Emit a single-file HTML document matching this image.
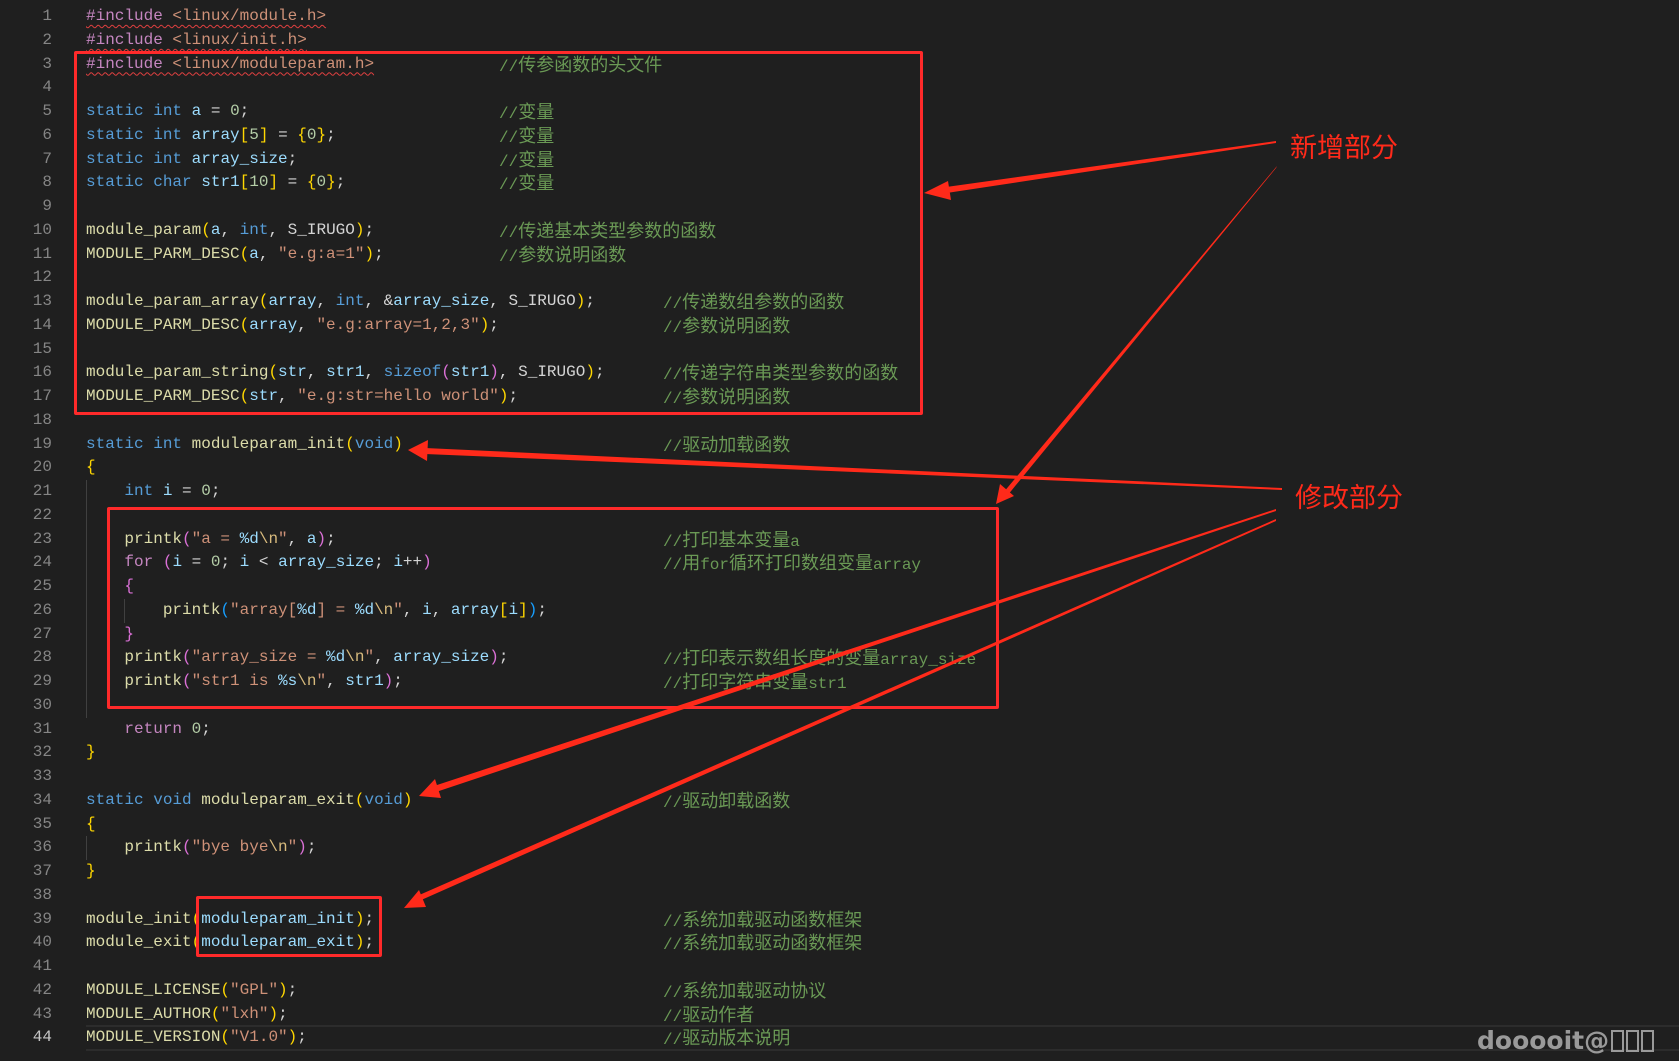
<!DOCTYPE html>
<html><head><meta charset="utf-8">
<style>
html,body{margin:0;padding:0;background:#1f1f1f;}
body{width:1679px;height:1061px;position:relative;overflow:hidden;font-family:"Liberation Mono","Noto Sans CJK SC",monospace;font-size:16px;color:#d4d4d4;}
#code{position:absolute;left:0;top:5px;width:1679px;}
.l{position:relative;height:23.76px;line-height:23.76px;white-space:pre;}
.n{position:absolute;right:1627px;top:0;color:#858585;text-align:right;}
.c{position:absolute;left:86px;top:0;}
.m{position:absolute;top:0;color:#6a9955;}
.m1{left:499px}.m2{left:663px}
.z{font-family:"Noto Sans CJK SC",sans-serif;font-size:18px;letter-spacing:0px;}
.k{color:#569cd6}.p{color:#c586c0}.f{color:#dcdcaa}.v{color:#9cdcfe}.s{color:#ce9178}.d{color:#b5cea8}.e{color:#d7ba7d}
.g{color:#ffd700}.o{color:#da70d6}.b{color:#179fff}.w{color:#d4d4d4}
.sq{text-decoration:underline wavy #e04040;text-underline-offset:4px;text-decoration-thickness:1px;}
.guide{position:absolute;width:1px;background:#404040;}
.box{position:absolute;border:3px solid #ff2a2a;border-radius:2px;}
.lbl{position:absolute;color:#ff2a1a;font-family:"Noto Sans CJK SC",sans-serif;font-size:27px;}
#wm{position:absolute;left:1477px;top:1026px;color:#9a9a9a;font-family:"DejaVu Sans",sans-serif;font-weight:bold;font-size:25px;white-space:nowrap;}
.tofu{display:inline-block;width:13px;height:22px;border:2px solid #9a9a9a;margin-left:2px;vertical-align:-3px;box-sizing:border-box;}
</style></head><body>
<div style="position:absolute;left:86px;top:1025px;width:1593px;height:22px;border-top:2px solid #2c2c2c;border-bottom:2px solid #2c2c2c;"></div>
<div class="guide" style="left:86px;top:480px;height:238px"></div>
<div class="guide" style="left:124px;top:599px;height:24px"></div>
<div class="guide" style="left:86px;top:836px;height:24px"></div>
<div id="code">
<div class="l"><span class="n">1</span><span class="c"><span class="p sq">#include</span><span class="s sq"> &lt;linux/module.h&gt;</span></span></div>
<div class="l"><span class="n">2</span><span class="c"><span class="p sq">#include</span><span class="s sq"> &lt;linux/init.h&gt;</span></span></div>
<div class="l"><span class="n">3</span><span class="c"><span class="p sq">#include</span><span class="s sq"> &lt;linux/moduleparam.h&gt;</span></span><span class="m m1">//<span class="z">传参函数的头文件</span></span></div>
<div class="l"><span class="n">4</span></div>
<div class="l"><span class="n">5</span><span class="c"><span class="k">static</span> <span class="k">int</span> <span class="v">a</span> = <span class="d">0</span>;</span><span class="m m1">//<span class="z">变量</span></span></div>
<div class="l"><span class="n">6</span><span class="c"><span class="k">static</span> <span class="k">int</span> <span class="v">array</span><span class="g">[</span><span class="d">5</span><span class="g">]</span> = <span class="g">{</span><span class="d">0</span><span class="g">}</span>;</span><span class="m m1">//<span class="z">变量</span></span></div>
<div class="l"><span class="n">7</span><span class="c"><span class="k">static</span> <span class="k">int</span> <span class="v">array_size</span>;</span><span class="m m1">//<span class="z">变量</span></span></div>
<div class="l"><span class="n">8</span><span class="c"><span class="k">static</span> <span class="k">char</span> <span class="v">str1</span><span class="g">[</span><span class="d">10</span><span class="g">]</span> = <span class="g">{</span><span class="d">0</span><span class="g">}</span>;</span><span class="m m1">//<span class="z">变量</span></span></div>
<div class="l"><span class="n">9</span></div>
<div class="l"><span class="n">10</span><span class="c"><span class="f">module_param</span><span class="g">(</span><span class="v">a</span>, <span class="k">int</span>, <span class="w">S_IRUGO</span><span class="g">)</span>;</span><span class="m m1">//<span class="z">传递基本类型参数的函数</span></span></div>
<div class="l"><span class="n">11</span><span class="c"><span class="f">MODULE_PARM_DESC</span><span class="g">(</span><span class="v">a</span>, <span class="s">"e.g:a=1"</span><span class="g">)</span>;</span><span class="m m1">//<span class="z">参数说明函数</span></span></div>
<div class="l"><span class="n">12</span></div>
<div class="l"><span class="n">13</span><span class="c"><span class="f">module_param_array</span><span class="g">(</span><span class="v">array</span>, <span class="k">int</span>, &amp;<span class="v">array_size</span>, <span class="w">S_IRUGO</span><span class="g">)</span>;</span><span class="m m2">//<span class="z">传递数组参数的函数</span></span></div>
<div class="l"><span class="n">14</span><span class="c"><span class="f">MODULE_PARM_DESC</span><span class="g">(</span><span class="v">array</span>, <span class="s">"e.g:array=1,2,3"</span><span class="g">)</span>;</span><span class="m m2">//<span class="z">参数说明函数</span></span></div>
<div class="l"><span class="n">15</span></div>
<div class="l"><span class="n">16</span><span class="c"><span class="f">module_param_string</span><span class="g">(</span><span class="v">str</span>, <span class="v">str1</span>, <span class="k">sizeof</span><span class="o">(</span><span class="v">str1</span><span class="o">)</span>, <span class="w">S_IRUGO</span><span class="g">)</span>;</span><span class="m m2">//<span class="z">传递字符串类型参数的函数</span></span></div>
<div class="l"><span class="n">17</span><span class="c"><span class="f">MODULE_PARM_DESC</span><span class="g">(</span><span class="v">str</span>, <span class="s">"e.g:str=hello world"</span><span class="g">)</span>;</span><span class="m m2">//<span class="z">参数说明函数</span></span></div>
<div class="l"><span class="n">18</span></div>
<div class="l"><span class="n">19</span><span class="c"><span class="k">static</span> <span class="k">int</span> <span class="f">moduleparam_init</span><span class="g">(</span><span class="k">void</span><span class="g">)</span></span><span class="m m2">//<span class="z">驱动加载函数</span></span></div>
<div class="l"><span class="n">20</span><span class="c"><span class="g">{</span></span></div>
<div class="l"><span class="n">21</span><span class="c">    <span class="k">int</span> <span class="v">i</span> = <span class="d">0</span>;</span></div>
<div class="l"><span class="n">22</span></div>
<div class="l"><span class="n">23</span><span class="c">    <span class="f">printk</span><span class="o">(</span><span class="s">"a = </span><span class="v">%d</span><span class="e">\n</span><span class="s">"</span>, <span class="v">a</span><span class="o">)</span>;</span><span class="m m2">//<span class="z">打印基本变量</span>a</span></div>
<div class="l"><span class="n">24</span><span class="c">    <span class="p">for</span> <span class="o">(</span><span class="v">i</span> = <span class="d">0</span>; <span class="v">i</span> &lt; <span class="v">array_size</span>; <span class="v">i</span>++<span class="o">)</span></span><span class="m m2">//<span class="z">用</span>for<span class="z">循环打印数组变量</span>array</span></div>
<div class="l"><span class="n">25</span><span class="c">    <span class="o">{</span></span></div>
<div class="l"><span class="n">26</span><span class="c">        <span class="f">printk</span><span class="b">(</span><span class="s">"array[</span><span class="v">%d</span><span class="s">] = </span><span class="v">%d</span><span class="e">\n</span><span class="s">"</span>, <span class="v">i</span>, <span class="v">array</span><span class="g">[</span><span class="v">i</span><span class="g">]</span><span class="b">)</span>;</span></div>
<div class="l"><span class="n">27</span><span class="c">    <span class="o">}</span></span></div>
<div class="l"><span class="n">28</span><span class="c">    <span class="f">printk</span><span class="o">(</span><span class="s">"array_size = </span><span class="v">%d</span><span class="e">\n</span><span class="s">"</span>, <span class="v">array_size</span><span class="o">)</span>;</span><span class="m m2">//<span class="z">打印表示数组长度的变量</span>array_size</span></div>
<div class="l"><span class="n">29</span><span class="c">    <span class="f">printk</span><span class="o">(</span><span class="s">"str1 is </span><span class="v">%s</span><span class="e">\n</span><span class="s">"</span>, <span class="v">str1</span><span class="o">)</span>;</span><span class="m m2">//<span class="z">打印字符串变量</span>str1</span></div>
<div class="l"><span class="n">30</span></div>
<div class="l"><span class="n">31</span><span class="c">    <span class="p">return</span> <span class="d">0</span>;</span></div>
<div class="l"><span class="n">32</span><span class="c"><span class="g">}</span></span></div>
<div class="l"><span class="n">33</span></div>
<div class="l"><span class="n">34</span><span class="c"><span class="k">static</span> <span class="k">void</span> <span class="f">moduleparam_exit</span><span class="g">(</span><span class="k">void</span><span class="g">)</span></span><span class="m m2">//<span class="z">驱动卸载函数</span></span></div>
<div class="l"><span class="n">35</span><span class="c"><span class="g">{</span></span></div>
<div class="l"><span class="n">36</span><span class="c">    <span class="f">printk</span><span class="o">(</span><span class="s">"bye bye</span><span class="e">\n</span><span class="s">"</span><span class="o">)</span>;</span></div>
<div class="l"><span class="n">37</span><span class="c"><span class="g">}</span></span></div>
<div class="l"><span class="n">38</span></div>
<div class="l"><span class="n">39</span><span class="c"><span class="f">module_init</span><span class="g">(</span><span class="v">moduleparam_init</span><span class="g">)</span>;</span><span class="m m2">//<span class="z">系统加载驱动函数框架</span></span></div>
<div class="l"><span class="n">40</span><span class="c"><span class="f">module_exit</span><span class="g">(</span><span class="v">moduleparam_exit</span><span class="g">)</span>;</span><span class="m m2">//<span class="z">系统加载驱动函数框架</span></span></div>
<div class="l"><span class="n">41</span></div>
<div class="l"><span class="n">42</span><span class="c"><span class="f">MODULE_LICENSE</span><span class="g">(</span><span class="s">"GPL"</span><span class="g">)</span>;</span><span class="m m2">//<span class="z">系统加载驱动协议</span></span></div>
<div class="l"><span class="n">43</span><span class="c"><span class="f">MODULE_AUTHOR</span><span class="g">(</span><span class="s">"lxh"</span><span class="g">)</span>;</span><span class="m m2">//<span class="z">驱动作者</span></span></div>
<div class="l"><span class="n" style="color:#c6c6c6">44</span><span class="c"><span class="f">MODULE_VERSION</span><span class="g">(</span><span class="s">"V1.0"</span><span class="g">)</span>;</span><span class="m m2">//<span class="z">驱动版本说明</span></span></div>
</div>

<div class="box" style="left:74px;top:51px;width:843px;height:358px"></div>
<div class="box" style="left:107px;top:507px;width:886px;height:196px"></div>
<div class="box" style="left:196px;top:896px;width:180px;height:55px"></div>

<div class="lbl" style="left:1290px;top:126px">新增部分</div>
<div class="lbl" style="left:1295px;top:476px">修改部分</div>

<svg width="1679" height="1061" style="position:absolute;left:0;top:0" xmlns="http://www.w3.org/2000/svg">
<g fill="#ff2a1a">
<polygon points="1276,141 1276,143 940,194 939,188"/>
<polygon points="924,193 948,181 951,200"/>
<polygon points="1277,166 1276,168 1007,496 1003,493"/>
<polygon points="996,504 1000,484 1014,496"/>
<polygon points="1282,488 1282,490 425,454 425,448"/>
<polygon points="408,450 428,440 427,461"/>
<polygon points="1276,509 1276,511 436,792 434,786"/>
<polygon points="419,796 435,779 441,798"/>
<polygon points="1276,519 1276,521 419,901 417,896"/>
<polygon points="404,908 419,890 426,907"/>
</g>
</svg>

<div id="wm">dooooit@<span class="tofu"></span><span class="tofu"></span><span class="tofu"></span></div>
</body></html>
